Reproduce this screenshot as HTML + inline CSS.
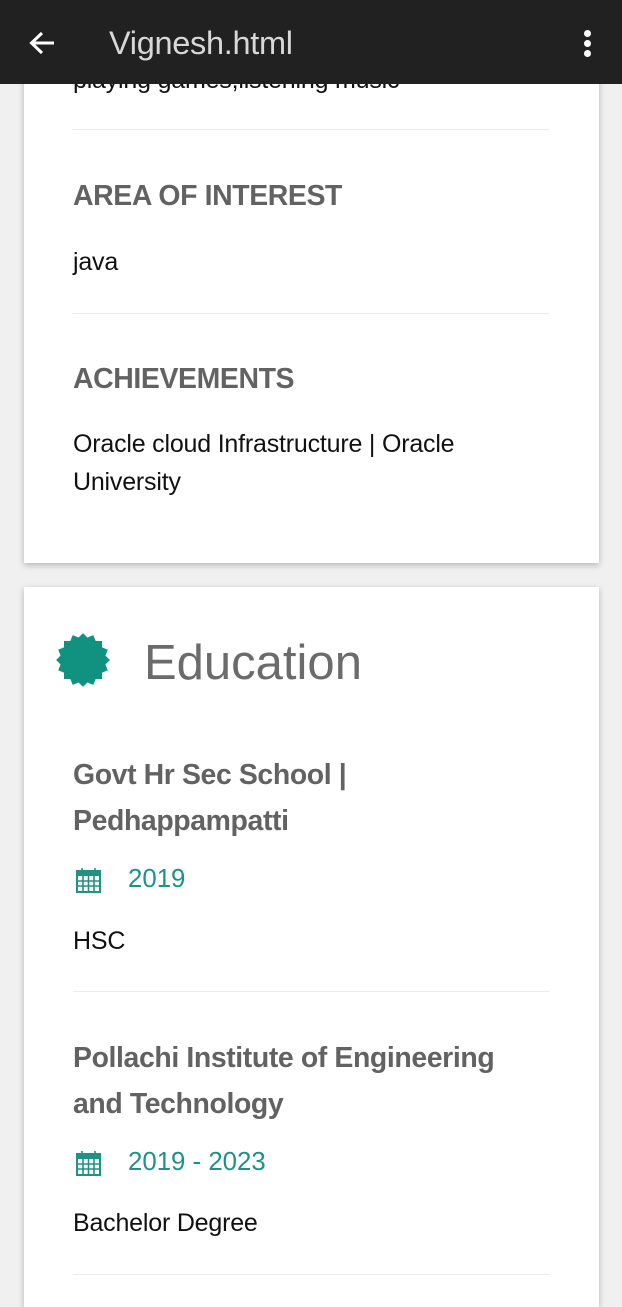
<!DOCTYPE html>
<html><head><meta charset="utf-8"><style>
*{margin:0;padding:0;box-sizing:border-box}
body{width:622px;height:1280px;overflow:hidden;background:#f0f0f0;font-family:"Liberation Sans",sans-serif;position:relative}
.card{position:absolute;left:24px;width:575px;background:#fff;box-shadow:0 2px 6px rgba(0,0,0,.25)}
.t{position:absolute;white-space:nowrap}
.h{color:#626262;font-size:29px;font-weight:bold;letter-spacing:-0.4px;transform:scaleX(.98);transform-origin:left}
.b{color:#111;font-size:25px;letter-spacing:-0.2px}
.hr{position:absolute;left:73px;width:477px;height:1px;background:#ececec}
.y{color:#1e9385;font-size:25.8px}
.top{position:absolute;left:0;top:0;width:622px;height:84px;background:#212121;z-index:5}
</style></head><body>
<div class="card" style="top:60px;height:503px"></div>
<div class="card" style="top:587px;height:720px"></div>
<div class="top">
<svg style="position:absolute;left:28px;top:30px" width="28" height="26" viewBox="0 0 28 26"><path d="M26 13H4M14 3L3.5 13L14 23" stroke="#fff" stroke-width="3" fill="none"/></svg>
<div class="t" style="left:109px;top:25px;color:#d8d8d8;font-size:32.5px;letter-spacing:-0.3px">Vignesh.html</div>
<div style="position:absolute;left:584px;top:30px;width:7px;height:7px;border-radius:50%;background:#fff"></div>
<div style="position:absolute;left:584px;top:40px;width:7px;height:7px;border-radius:50%;background:#fff"></div>
<div style="position:absolute;left:584px;top:50px;width:7px;height:7px;border-radius:50%;background:#fff"></div>
</div>
<div class="t b" style="left:73px;top:66px">playing games,listening music</div>
<div class="hr" style="top:129px"></div>
<div class="t h" style="left:73px;top:180px">AREA OF INTEREST</div>
<div class="t b" style="left:73px;top:248px">java</div>
<div class="hr" style="top:313px"></div>
<div class="t h" style="left:73px;top:363px">ACHIEVEMENTS</div>
<div class="t b" style="left:73px;top:430px">Oracle cloud Infrastructure | Oracle</div>
<div class="t b" style="left:73px;top:468px">University</div>

<div style="position:absolute;left:64px;top:641px;width:38px;height:38px">
<div style="position:absolute;inset:0;background:#11917f"></div>
<div style="position:absolute;inset:0;background:#11917f;transform:rotate(22.5deg)"></div>
<div style="position:absolute;inset:0;background:#11917f;transform:rotate(45deg)"></div>
<div style="position:absolute;inset:0;background:#11917f;transform:rotate(67.5deg)"></div>
</div>
<div class="t" style="left:144px;top:635px;color:#6b6b6b;font-size:49px">Education</div>
<div class="t h" style="left:73px;top:759px">Govt Hr Sec School |</div>
<div class="t h" style="left:73px;top:805px">Pedhappampatti</div>
<svg style="position:absolute;left:76px;top:867px" width="25" height="26" viewBox="0 0 25 26"><rect x="1" y="4" width="23" height="21" fill="none" stroke="#1e9385" stroke-width="2"/><rect x="1" y="4" width="23" height="5" fill="#1e9385"/><path d="M6 1v6M19 1v6M1 14h23M1 19h23M7 9v16M12.5 9v16M18 9v16" stroke="#1e9385" stroke-width="1.6"/></svg>
<div class="t y" style="left:128px;top:865px">2019</div>
<div class="t b" style="left:73px;top:927px">HSC</div>
<div class="hr" style="top:991px"></div>
<div class="t h" style="left:73px;top:1042px">Pollachi Institute of Engineering</div>
<div class="t h" style="left:73px;top:1088px">and Technology</div>
<svg style="position:absolute;left:76px;top:1150px" width="25" height="26" viewBox="0 0 25 26"><rect x="1" y="4" width="23" height="21" fill="none" stroke="#1e9385" stroke-width="2"/><rect x="1" y="4" width="23" height="5" fill="#1e9385"/><path d="M6 1v6M19 1v6M1 14h23M1 19h23M7 9v16M12.5 9v16M18 9v16" stroke="#1e9385" stroke-width="1.6"/></svg>
<div class="t y" style="left:128px;top:1148px">2019 - 2023</div>
<div class="t b" style="left:73px;top:1209px">Bachelor Degree</div>
<div class="hr" style="top:1274px"></div>
</body></html>
